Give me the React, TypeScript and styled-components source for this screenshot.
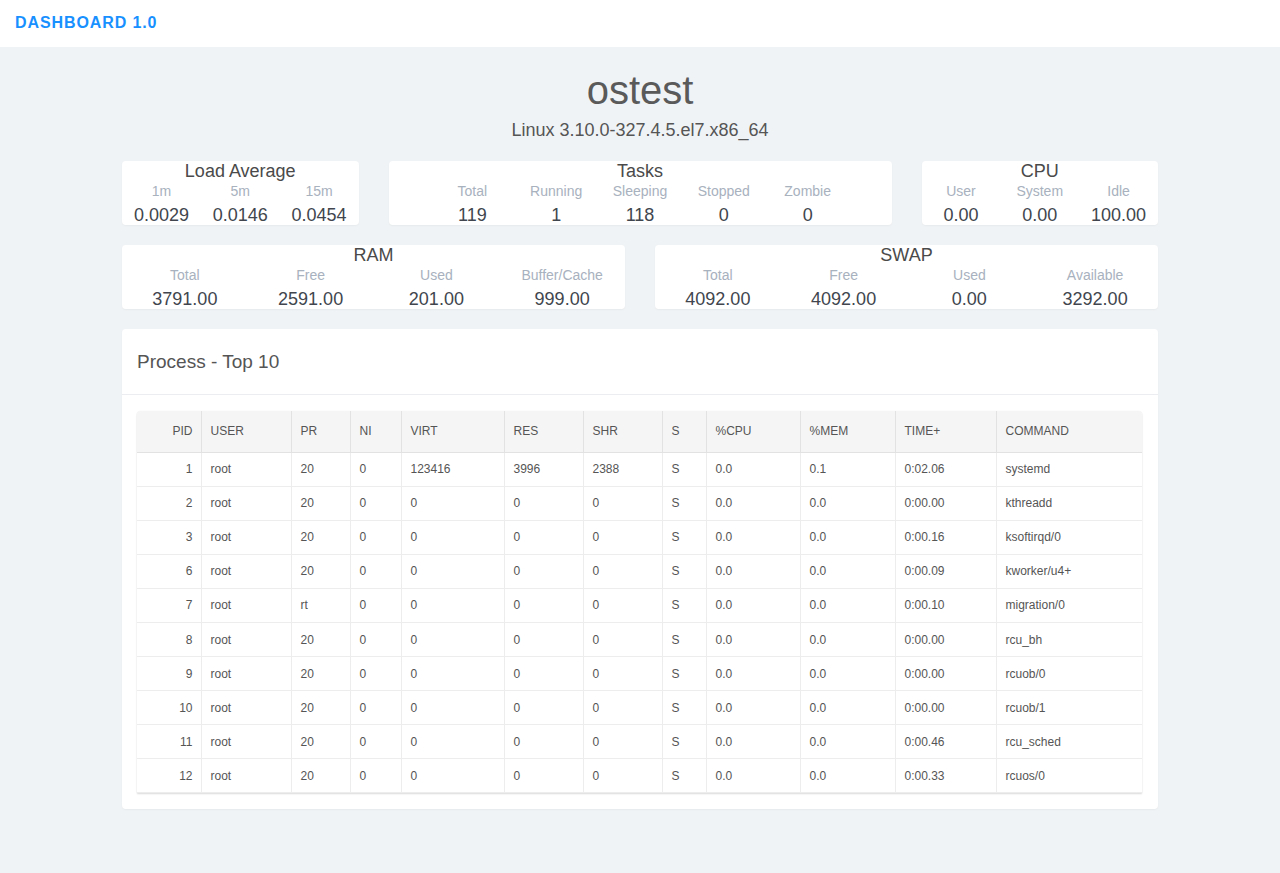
import React from "react";
import styled, { createGlobalStyle } from "styled-components";

const GlobalStyle = createGlobalStyle`
  html, body { margin: 0; padding: 0; }
  body {
    background: #f0f3f6;
    font-family: "Liberation Sans", Arial, sans-serif;
    color: #555;
  }
  * { box-sizing: border-box; }
`;

const TopBar = styled.header`
  height: 47px;
  background: #fff;
  display: flex;
  align-items: center;
  padding: 0 15px;
`;

const Brand = styled.div`
  color: #1890ff;
  font-weight: bold;
  font-size: 16px;
  letter-spacing: 0.9px;
  margin-top: -2px;
`;

const Main = styled.main`
  width: 1036px;
  margin: 0 auto;
  padding: 19px 0 40px;
`;

const HostName = styled.h1`
  margin: 0;
  font-size: 40px;
  line-height: 48px;
  font-weight: normal;
  text-align: center;
  color: #5a5a5a;
`;

const Kernel = styled.div`
  margin-top: 4px;
  font-size: 18px;
  line-height: 24px;
  text-align: center;
  color: #555;
`;

const Grid = styled.div<{ $top: number }>`
  display: grid;
  grid-template-columns: repeat(24, 1fr);
  column-gap: 30px;
  margin-top: ${(p) => p.$top}px;
`;

const StatCard = styled.section<{ $span: number }>`
  grid-column: span ${(p) => p.$span};
  background: #fff;
  border-radius: 4px;
  box-shadow: 0 1px 2px rgba(0, 0, 0, 0.04);
  height: 64px;
  text-align: center;
  overflow: hidden;
`;

const CardTitle = styled.div`
  font-size: 18px;
  line-height: 20px;
  color: #4a4a4a;
`;

const StatRow = styled.div`
  display: flex;
  justify-content: center;
`;

const Stat = styled.div<{ $w: string }>`
  width: ${(p) => p.$w};
  display: flex;
  flex-direction: column;
  align-items: center;
`;

const StatLabel = styled.div`
  font-size: 14px;
  line-height: 21px;
  color: #a8b1be;
  white-space: nowrap;
`;

const StatValue = styled.div`
  margin-top: 3px;
  font-size: 18px;
  line-height: 20px;
  color: #41464e;
  white-space: nowrap;
`;

const ProcessCard = styled.section`
  margin-top: 20px;
  background: #fff;
  border-radius: 4px;
  box-shadow: 0 1px 2px rgba(0, 0, 0, 0.04);
`;

const ProcessHead = styled.div`
  height: 66px;
  padding: 1px 15px 0;
  display: flex;
  align-items: center;
  border-bottom: 1px solid #ebedf0;
  font-size: 19px;
  color: #555;
`;

const ProcessBody = styled.div`
  padding: 16px 16px 16px 15px;
`;

const TableWrap = styled.div`
  border-radius: 4px 4px 0 0;
  box-shadow: 0 1px 2px rgba(0, 0, 0, 0.14), 0 0 1px rgba(0, 0, 0, 0.1);
  overflow: hidden;
`;

const Table = styled.table`
  width: 100%;
  table-layout: fixed;
  border-collapse: collapse;
  font-size: 12px;
  color: #555;
`;

const Th = styled.th<{ $right?: boolean }>`
  height: 41px;
  padding: 0 8px 0 9px;
  background: #f5f5f5;
  font-weight: normal;
  text-align: ${(p) => (p.$right ? "right" : "left")};
  border-left: 1px solid #e2e2e2;
  border-bottom: 1px solid #e2e2e2;
  &:first-child { border-left: none; }
`;

const Td = styled.td<{ $right?: boolean }>`
  height: 34.1px;
  padding: 0 8px 0 9px;
  text-align: ${(p) => (p.$right ? "right" : "left")};
  border-left: 1px solid #ededed;
  border-bottom: 1px solid #ededed;
  &:first-child { border-left: none; }
`;

const columns = [
  { key: "PID", w: 64, right: true },
  { key: "USER", w: 90 },
  { key: "PR", w: 59 },
  { key: "NI", w: 51 },
  { key: "VIRT", w: 103 },
  { key: "RES", w: 79 },
  { key: "SHR", w: 79 },
  { key: "S", w: 44 },
  { key: "%CPU", w: 94 },
  { key: "%MEM", w: 95 },
  { key: "TIME+", w: 101 },
  { key: "COMMAND", w: 146 },
];

const rows = [
  ["1", "root", "20", "0", "123416", "3996", "2388", "S", "0.0", "0.1", "0:02.06", "systemd"],
  ["2", "root", "20", "0", "0", "0", "0", "S", "0.0", "0.0", "0:00.00", "kthreadd"],
  ["3", "root", "20", "0", "0", "0", "0", "S", "0.0", "0.0", "0:00.16", "ksoftirqd/0"],
  ["6", "root", "20", "0", "0", "0", "0", "S", "0.0", "0.0", "0:00.09", "kworker/u4+"],
  ["7", "root", "rt", "0", "0", "0", "0", "S", "0.0", "0.0", "0:00.10", "migration/0"],
  ["8", "root", "20", "0", "0", "0", "0", "S", "0.0", "0.0", "0:00.00", "rcu_bh"],
  ["9", "root", "20", "0", "0", "0", "0", "S", "0.0", "0.0", "0:00.00", "rcuob/0"],
  ["10", "root", "20", "0", "0", "0", "0", "S", "0.0", "0.0", "0:00.00", "rcuob/1"],
  ["11", "root", "20", "0", "0", "0", "0", "S", "0.0", "0.0", "0:00.46", "rcu_sched"],
  ["12", "root", "20", "0", "0", "0", "0", "S", "0.0", "0.0", "0:00.33", "rcuos/0"],
];

type Item = [string, string];

const Card = ({ title, span, items, w }: { title: string; span: number; items: Item[]; w: string }) => (
  <StatCard $span={span}>
    <CardTitle>{title}</CardTitle>
    <StatRow>
      {items.map(([l, v]) => (
        <Stat key={l} $w={w}>
          <StatLabel>{l}</StatLabel>
          <StatValue>{v}</StatValue>
        </Stat>
      ))}
    </StatRow>
  </StatCard>
);

export default function App() {
  return (
    <>
      <GlobalStyle />
      <TopBar>
        <Brand>DASHBOARD 1.0</Brand>
      </TopBar>
      <Main>
        <HostName>ostest</HostName>
        <Kernel>Linux 3.10.0-327.4.5.el7.x86_64</Kernel>
        <Grid $top={19}>
          <Card
            title="Load Average"
            span={6}
            w="33.333%"
            items={[
              ["1m", "0.0029"],
              ["5m", "0.0146"],
              ["15m", "0.0454"],
            ]}
          />
          <Card
            title="Tasks"
            span={12}
            w="16.666%"
            items={[
              ["Total", "119"],
              ["Running", "1"],
              ["Sleeping", "118"],
              ["Stopped", "0"],
              ["Zombie", "0"],
            ]}
          />
          <Card
            title="CPU"
            span={6}
            w="33.333%"
            items={[
              ["User", "0.00"],
              ["System", "0.00"],
              ["Idle", "100.00"],
            ]}
          />
        </Grid>
        <Grid $top={20}>
          <Card
            title="RAM"
            span={12}
            w="25%"
            items={[
              ["Total", "3791.00"],
              ["Free", "2591.00"],
              ["Used", "201.00"],
              ["Buffer/Cache", "999.00"],
            ]}
          />
          <Card
            title="SWAP"
            span={12}
            w="25%"
            items={[
              ["Total", "4092.00"],
              ["Free", "4092.00"],
              ["Used", "0.00"],
              ["Available", "3292.00"],
            ]}
          />
        </Grid>
        <ProcessCard>
          <ProcessHead>Process - Top 10</ProcessHead>
          <ProcessBody>
            <TableWrap>
              <Table>
                <colgroup>
                  {columns.map((c) => (
                    <col key={c.key} style={{ width: c.w }} />
                  ))}
                </colgroup>
                <thead>
                  <tr>
                    {columns.map((c) => (
                      <Th key={c.key} $right={c.right}>
                        {c.key}
                      </Th>
                    ))}
                  </tr>
                </thead>
                <tbody>
                  {rows.map((r) => (
                    <tr key={r[0]}>
                      {r.map((v, i) => (
                        <Td key={i} $right={columns[i].right}>
                          {v}
                        </Td>
                      ))}
                    </tr>
                  ))}
                </tbody>
              </Table>
            </TableWrap>
          </ProcessBody>
        </ProcessCard>
      </Main>
    </>
  );
}
